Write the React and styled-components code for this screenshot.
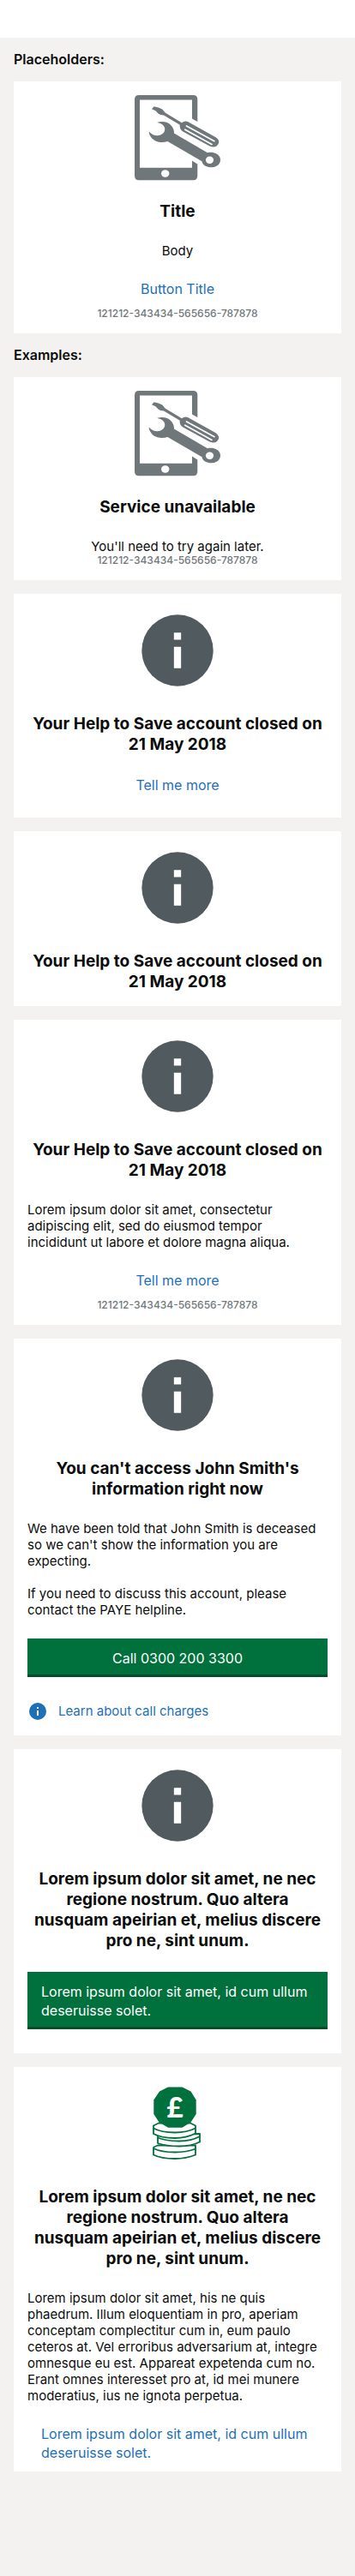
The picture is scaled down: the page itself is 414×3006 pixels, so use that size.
import React from "react";
import styled, { createGlobalStyle, css } from "styled-components";

const GlobalStyle = createGlobalStyle`
  *, *::before, *::after { box-sizing: border-box; }
  body {
    margin: 0;
    background: #f3f2f1;
    color: #0b0c0c;
    font-family: Inter, Roboto, "Liberation Sans", sans-serif;
    font-size: 15px;
    line-height: 19px;
  }
`;

const StatusBar = styled.header`
  height: 44px;
  background: #ffffff;
`;

const Page = styled.main`
  padding: 0 16px 120px;
`;

const SectionLabel = styled.h2`
  margin: 0;
  padding: 16px 0;
  font-size: 16px;
  line-height: 19px;
  font-weight: 600;
`;

const CardList = styled.div`
  display: flex;
  flex-direction: column;
  gap: 16px;
`;

const Card = styled.article`
  display: flex;
  flex-direction: column;
  align-items: center;
  padding: 16px 16px ${(p) => (p.$flush ? 0 : 16)}px;
  background: #ffffff;
`;

const IconBox = styled.div`
  width: 100px;
  height: 100px;
  svg { display: block; width: 100%; height: 100%; }
`;

const Title = styled.h3`
  margin: 24px 0 0;
  font-size: 19px;
  line-height: 24px;
  font-weight: 700;
  text-align: center;
`;

const Body = styled.p`
  align-self: ${(p) => (p.$centered ? "center" : "stretch")};
  margin: ${(p) => (p.$next ? 19 : 24)}px 0 0;
  padding-right: ${(p) => (p.$centered ? 0 : 8)}px;
`;

const buttonText = css`
  border: 0;
  font-family: inherit;
  font-size: 16px;
  line-height: 22px;
  cursor: pointer;
`;

const LinkButton = styled.button`
  ${buttonText}
  margin-top: 12px;
  padding: 12px 16px 11px;
  background: transparent;
  color: #1d70b8;
  text-align: left;
`;

const PrimaryButton = styled.button`
  ${buttonText}
  align-self: stretch;
  margin: 24px 0 12px;
  padding: 12px 16px 11px;
  background: #00703c;
  box-shadow: inset 0 -3px 0 #004d29;
  color: #ffffff;
  text-align: ${(p) => (p.$start ? "left" : "center")};
`;

const InfoLink = styled.a`
  display: flex;
  align-self: stretch;
  align-items: center;
  gap: 12px;
  margin-top: 16px;
  color: #1d70b8;
  line-height: 24px;
  text-decoration: none;
  svg { width: 24px; height: 24px; }
`;

const Code = styled.small`
  color: #6f777b;
  font-size: 12px;
  line-height: 14px;
  font-weight: 500;
`;

const InfoIcon = ({ color = "#505a5f" }) => (
  <svg viewBox="0 0 24 24" aria-hidden="true">
    <circle cx="12" cy="12" r="10" fill={color} />
    <path d="M11 7h2v2h-2zM11 11h2v6h-2z" fill="#fff" />
  </svg>
);

const RepairIcon = () => (
  <svg viewBox="0 0 100 100" aria-hidden="true" fill="#6f777b">
    <path d="M5 0H68.300Q73.300 0 73.300 5V31L67 27.500V5.500H6V84.800H67V76.500L73.300 80.500V94.200Q73.300 99.200 68.300 99.200H5Q0 99.200 0 94.200V5Q0 0 5 0Z" />
    <ellipse cx="35.700" cy="91.500" rx="4.700" ry="4.200" fill="#fff" />
    <path d="M20 16.200L22.600 13.300Q28 14 32.300 16.600L35.600 20.500L55 32.200Q58 29.800 62 31L94.700 49.200Q99 52 98 56Q96 60.800 91 60.500Q89 60.400 87 59.300L56.300 42.500Q52 40 52.800 34.800L34 23.400Q30 23.400 27.500 21.500L24.500 18.300Z" />
    <path d="M60.500 36L93 53.700M58.800 40.200L90 57.400" fill="none" stroke="#fff" strokeWidth="1.700" strokeLinecap="round" />
    <path d="M26 31.900C33 30 40 31.500 43.500 36.500C45.500 39.300 46 42 46 44.500L85 67.200C91 65.500 100 68.500 100 75.500C100 82 93 85.500 86.500 84C81.500 82.800 79 80.500 78.500 77.200L38.500 54C31 56.500 23 54.500 19.500 49.500C17.500 46.800 16.500 44.500 16.800 42.400C20 46.500 25 48.200 29.500 46.800C34 45.400 36 41.500 35 38C34 34.500 30.500 32.500 26 31.900Z" />
    <ellipse cx="87.500" cy="75.700" rx="4.600" ry="4.200" fill="#fff" />
  </svg>
);

const CoinsIcon = () => (
  <svg viewBox="0 0 100 100" aria-hidden="true">
    <g fill="#fff" stroke="#00703c" strokeWidth="1.800" strokeLinejoin="round">
      <path d="M22 78Q24 76.500 27 75.500H71V86.500Q60 91 47 91Q31 91 22 86.500Z" />
      <path d="M22 79Q31 83.500 47 83.500Q61 83.500 71 79.500" />
      <path d="M27 63L76 62V71.500Q66 76.500 52 76.500Q37 76.500 27 73Z" />
      <path d="M27 66.500Q37 70.500 52 70.500Q66 70.500 76 65" />
      <path d="M22 52.500L28 49.500H65L71 52.500V61.500Q60 67 47 67Q31 67 22 62Z" />
      <path d="M22 55.500Q31 60.500 47 60.500Q61 60.500 71 55.500" />
    </g>
    <path d="M39 7.500H55.500L65.500 12.500L71.700 22.500V39L65.500 48.500L55.500 54.800H39L28.500 48.500L22.300 39V22.500L29 12.500Z" fill="#00703c" />
    <text x="47" y="43" fill="#fff" fontFamily="Lato, sans-serif" fontSize="33" fontWeight="900" textAnchor="middle">£</text>
  </svg>
);

const REFERENCE = "121212-343434-565656-787878";
const CLOSED = "Your Help to Save account closed on 21 May 2018";
const LONG_TITLE =
  "Lorem ipsum dolor sit amet, ne nec regione nostrum. Quo altera nusquam apeirian et, melius discere pro ne, sint unum.";
const LONG_ACTION = "Lorem ipsum dolor sit amet, id cum ullum deseruisse solet.";

export default function App() {
  return (
    <>
      <GlobalStyle />
      <StatusBar />
      <Page>
        <SectionLabel>Placeholders:</SectionLabel>
        <CardList>
          <Card>
            <IconBox><RepairIcon /></IconBox>
            <Title>Title</Title>
            <Body $centered>Body</Body>
            <LinkButton>Button Title</LinkButton>
            <Code>{REFERENCE}</Code>
          </Card>
        </CardList>

        <SectionLabel>Examples:</SectionLabel>
        <CardList>
          <Card>
            <IconBox><RepairIcon /></IconBox>
            <Title>Service unavailable</Title>
            <Body $centered>You'll need to try again later.</Body>
            <Code>{REFERENCE}</Code>
          </Card>

          <Card>
            <IconBox><InfoIcon /></IconBox>
            <Title>{CLOSED}</Title>
            <LinkButton>Tell me more</LinkButton>
          </Card>

          <Card>
            <IconBox><InfoIcon /></IconBox>
            <Title>{CLOSED}</Title>
          </Card>

          <Card>
            <IconBox><InfoIcon /></IconBox>
            <Title>{CLOSED}</Title>
            <Body>
              Lorem ipsum dolor sit amet, consectetur adipiscing elit, sed do
              eiusmod tempor incididunt ut labore et dolore magna aliqua.
            </Body>
            <LinkButton>Tell me more</LinkButton>
            <Code>{REFERENCE}</Code>
          </Card>

          <Card>
            <IconBox><InfoIcon /></IconBox>
            <Title>You can't access John Smith's information right now</Title>
            <Body>
              We have been told that John Smith is deceased so we can't show
              the information you are expecting.
            </Body>
            <Body $next>
              If you need to discuss this account, please contact the PAYE
              helpline.
            </Body>
            <PrimaryButton>Call 0300 200 3300</PrimaryButton>
            <InfoLink href="#call-charges">
              <InfoIcon color="#1d70b8" />
              Learn about call charges
            </InfoLink>
          </Card>

          <Card>
            <IconBox><InfoIcon /></IconBox>
            <Title>{LONG_TITLE}</Title>
            <PrimaryButton $start>{LONG_ACTION}</PrimaryButton>
          </Card>

          <Card $flush>
            <IconBox><CoinsIcon /></IconBox>
            <Title>{LONG_TITLE}</Title>
            <Body>
              Lorem ipsum dolor sit amet, his ne quis phaedrum. Illum
              eloquentiam in pro, aperiam conceptam complectitur cum in, eum
              paulo ceteros at. Vel erroribus adversarium at, integre omnesque
              eu est. Appareat expetenda cum no. Erant omnes interesset pro
              at, id mei munere moderatius, ius ne ignota perpetua.
            </Body>
            <LinkButton>{LONG_ACTION}</LinkButton>
          </Card>
        </CardList>
      </Page>
    </>
  );
}
